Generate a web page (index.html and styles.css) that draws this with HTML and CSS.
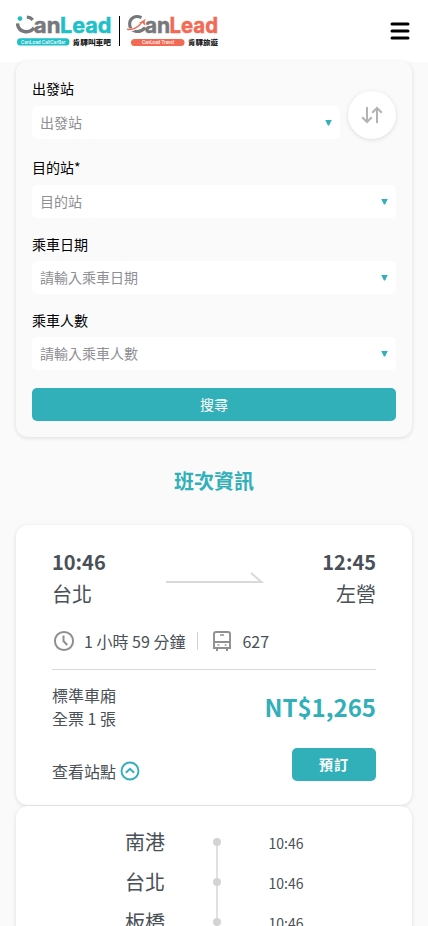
FILE: index.html
```html
<!DOCTYPE html>
<html lang="zh-Hant">
<head>
<meta charset="utf-8">
<meta name="viewport" content="width=device-width, initial-scale=1">
<title>CanLead</title>
<link rel="stylesheet" href="styles.css">
</head>
<body>
<header class="header">
  <div class="brands">
    <svg class="logo" width="96" height="44" viewBox="0 -8 96 44" role="img" aria-label="CanLead CallCarBar">
      <circle cx="4" cy="3.600" r="2.400" fill="#20c0c8"/>
      <path d="M10.800 2.200Q14.500 2.300 16.800 4.800" fill="none" stroke="#77787b" stroke-width="3.200"/>
      <path d="M1.500 8.500C2.200 17.800 13.500 19 18 12.800" fill="none" stroke="#77787b" stroke-width="3.400"/>
      <text class="word gray" x="17.800" y="17.600" textLength="26.700" lengthAdjust="spacingAndGlyphs">an</text>
      <text class="word teal" x="44" y="17.600" textLength="51.500" lengthAdjust="spacingAndGlyphs">Lead</text>
      <rect x="1" y="23.300" width="52.500" height="7.200" rx="3.600" fill="#20c0c8"/>
      <text class="tag" x="5" y="28.500" textLength="44.500" lengthAdjust="spacingAndGlyphs">CanLead CallCarBar</text>
      <text class="tag-name" x="56.500" y="29.700" textLength="38.500" lengthAdjust="spacingAndGlyphs">肯驛叫車吧</text>
    </svg>
    <span class="brand-divider"></span>
    <svg class="logo" width="92" height="44" viewBox="0 -8 92 44" role="img" aria-label="CanLead Travel">
      <path d="M14.500 2.600C8-.4 2.600 3.600 2.600 8.800C2.600 17.200 12.500 19 18.200 12.600" fill="none" stroke="#77787b" stroke-width="3.100"/>
      <path d="M0 14.800C6 16.200 12 12 15.500 7" fill="none" stroke="#fff" stroke-width="3"/>
      <path d="M0 14.200C6 15.700 12 11.500 15 7.100" fill="none" stroke="#f26a54" stroke-width="1.400"/>
      <path d="M18.800 3.700L17.700 6.500L18.200 10.500L16.800 9.500L15.800 8.100L11.800 7.700L15.200 6Z" fill="#f26a54"/>
      <text class="word gray" x="17.800" y="18.200" textLength="25.500" lengthAdjust="spacingAndGlyphs">an</text>
      <text class="word coral" x="42.500" y="18.200" textLength="48.500" lengthAdjust="spacingAndGlyphs">Lead</text>
      <rect x="4" y="24" width="53.500" height="7" rx="3.500" fill="#f26a54"/>
      <text class="tag" x="15" y="29.100" textLength="32" lengthAdjust="spacingAndGlyphs">CanLead Travel</text>
      <text class="tag-name" x="61" y="30" textLength="30" lengthAdjust="spacingAndGlyphs">肯驛旅遊</text>
    </svg>
  </div>
  <svg class="menu" width="20" height="18" viewBox="0 0 20 18"><path d="M2 2H18M2 9H18M2 16H18" stroke="#000" stroke-width="3" stroke-linecap="round"/></svg>
</header>

<main class="page">
  <section class="search">
    <div class="row">
      <div class="field">
        <label class="label">出發站</label>
        <div class="select"><span>出發站</span><i class="caret"></i></div>
      </div>
      <button class="swap" aria-label="交換">
        <svg width="22" height="18" viewBox="0 0 22 18" fill="none" stroke="#b3b3b3" stroke-width="2"><path d="M6 1V16M1.200 11.200L6 16L10.800 11.200M16 17V2M11.200 6.800L16 2L20.800 6.800"/></svg>
      </button>
    </div>
    <div class="field second">
      <label class="label">目的站*</label>
      <div class="select"><span>目的站</span><i class="caret"></i></div>
    </div>
    <div class="field compact">
      <label class="label">乘車日期</label>
      <div class="select"><span>請輸入乘車日期</span><i class="caret"></i></div>
    </div>
    <div class="field compact">
      <label class="label">乘車人數</label>
      <div class="select"><span>請輸入乘車人數</span><i class="caret"></i></div>
    </div>
    <button class="submit">搜尋</button>
  </section>

  <h2 class="title">班次資訊</h2>

  <article class="trip">
    <div class="route">
      <div class="stop"><b class="time">10:46</b><span class="place">台北</span></div>
      <svg class="arrow" width="98" height="12" viewBox="0 0 98 12" fill="none" stroke="#d9d9d9" stroke-width="2"><path d="M0 10H95.500L85 1"/></svg>
      <div class="stop end"><b class="time">12:45</b><span class="place">左營</span></div>
    </div>
    <div class="meta">
      <svg class="clock" width="24" height="24" viewBox="0 0 24 24" fill="none" stroke="#8e8e93" stroke-width="2"><circle cx="12" cy="12" r="9.100"/><path d="M11.500 6.500V12L15.200 16"/></svg>
      <span class="duration">1 小時 59 分鐘</span>
      <span class="meta-divider"></span>
      <svg class="bus" width="20" height="22" viewBox="0 0 20 22" fill="none" stroke="#8e8e93"><path d="M4 2H16Q18 2 18 4V18H2V4Q2 2 4 2ZM2 12H18" stroke-width="1.900"/><path d="M8 5H12M5.500 15H7.300M12.700 15H14.500" stroke-width="1.700"/><path d="M5 18V21M15 18V21" stroke-width="2"/></svg>
      <span>627</span>
    </div>
    <div class="fare">
      <div class="ticket"><span>標準車廂</span><span>全票 1 張</span></div>
      <strong class="price">NT$1,265</strong>
    </div>
    <div class="actions">
      <span class="stations">查看站點
        <svg width="20" height="20" viewBox="0 0 20 20" fill="none" stroke="#31b0b9" stroke-width="1.900"><circle cx="10" cy="10" r="8.500"/><path d="M5.800 11.700L10 7.700L14.200 11.700"/></svg>
      </span>
      <button class="book">預訂</button>
    </div>
  </article>

  <section class="timeline">
    <div class="station"><span class="name">南港</span><span class="rail"><i class="dot"></i></span><span class="at">10:46</span></div>
    <div class="station"><span class="name">台北</span><span class="rail"><i class="dot"></i></span><span class="at">10:46</span></div>
    <div class="station"><span class="name">板橋</span><span class="rail"><i class="dot"></i></span><span class="at">10:46</span></div>
  </section>
</main>
</body>
</html>
```
FILE: styles.css
```css
* { box-sizing: border-box; }
body {
  margin: 0;
  height: 926px;
  overflow: hidden;
  background: #fafafa;
  color: #495057;
  font-family: "Noto Sans CJK TC", sans-serif;
  font-size: 14px;
}
button { border: 0; padding: 0; font: inherit; }
svg { display: block; flex: none; }

.header {
  display: flex;
  justify-content: space-between;
  height: 62px;
  padding: 7px 18px 0 16px;
  background: #fff;
}
.brands { display: flex; }
.brand-divider { width: 1px; height: 30px; margin: 9px 7px 0; background: #000; }
.menu { margin-top: 15px; }
.word { font: 700 21.5px Inter, sans-serif; stroke-width: .5px; }
.gray { fill: #77787b; stroke: #77787b; }
.teal { fill: #20c0c8; stroke: #20c0c8; }
.coral { fill: #f26a54; stroke: #f26a54; }
.tag { font: 500 4.4px Inter, sans-serif; fill: #fff; }
.tag-name { font: 900 7.2px "Noto Sans CJK TC", sans-serif; fill: #222; }

.page { padding: 0 16px; }
.search {
  height: 376px;
  margin-top: -1px;
  padding: 16px;
  border-radius: 12px;
  background: #fafafa;
  box-shadow: 0 1px 4px rgba(0, 0, 0, .12);
}
.row { display: flex; align-items: flex-end; gap: 8px; }
.field { flex: 1; }
.second { margin-top: 17px; }
.compact { margin-top: 15px; }
.label { display: block; height: 29px; line-height: 22px; color: #000; }
.compact .label { height: 28px; }
.select {
  display: flex;
  align-items: center;
  justify-content: space-between;
  height: 33px;
  padding: 0 8px;
  border-radius: 5px;
  background: #fff;
  color: #8e8e93;
}
.select span { line-height: 20px; padding-bottom: 2px; }
.caret {
  width: 7px;
  height: 6px;
  background: #31b0b9;
  clip-path: polygon(0 0, 100% 0, 58% 100%, 42% 100%);
}
.swap {
  display: flex;
  align-items: center;
  justify-content: center;
  width: 48px;
  height: 48px;
  border-radius: 50%;
  background: #fff;
  box-shadow: 0 1px 4px rgba(0, 0, 0, .12);
}
.submit {
  display: block;
  width: 100%;
  height: 33px;
  margin-top: 18px;
  padding-bottom: 2px;
  border-radius: 5px;
  background: #31b0b9;
  color: #fff;
}

.title { margin: 29px 0; line-height: 30px; color: #31b0b9; font-size: 20px; text-align: center; }

.trip, .timeline {
  border-radius: 12px;
  background: #fff;
  box-shadow: 0 1px 4px rgba(0, 0, 0, .12);
}
.trip { height: 280px; padding: 21px 36px 0; }
.route { display: flex; justify-content: space-between; }
.stop { display: flex; flex-direction: column; }
.end { align-items: flex-end; }
.time { font-size: 20px; line-height: 32px; }
.place { font-size: 20px; line-height: 32px; }
.arrow { margin: 26px 0 0 1px; }
.meta {
  display: flex;
  align-items: center;
  height: 33px;
  margin: 14px 0 12px;
  font-size: 16px;
}
.meta span { line-height: 24px; }
.duration { margin-left: 8px; }
.meta-divider { width: 1px; height: 18px; margin: 0 14px 0 12px; background: #d1d1d6; }
.bus { margin-right: 10px; }
.fare {
  display: flex;
  justify-content: space-between;
  align-items: center;
  height: 76px;
  padding-bottom: 2px;
  border-top: 1px solid #d9d9d9;
}
.ticket { display: flex; flex-direction: column; font-size: 16px; line-height: 23px; }
.price { color: #31b0b9; font-size: 24px; }
.actions { display: flex; justify-content: space-between; margin-top: 3px; }
.stations { display: flex; align-items: center; gap: 4px; height: 46px; font-size: 16px; }
.book {
  width: 84px;
  height: 33px;
  padding-bottom: 2px;
  border-radius: 5px;
  background: #31b0b9;
  color: #fff;
  font-weight: 700;
  letter-spacing: 1px;
}

.timeline { margin-top: 1px; padding-top: 16px; }
.station { display: grid; grid-template-columns: 149px 103px 1fr; align-items: center; height: 40px; }
.name { font-size: 20px; text-align: right; line-height: 40px; }
.at { padding: 1px 0 0 .5px; }
.rail {
  display: flex;
  align-items: center;
  justify-content: center;
  height: 40px;
  background: linear-gradient(#e0e0e0, #e0e0e0) center / 2px 100% no-repeat;
}
.station:first-child .rail { background-size: 2px 50%; background-position: bottom; }
.dot { width: 8px; height: 8px; border-radius: 50%; background: #d4d4d4; }
```
